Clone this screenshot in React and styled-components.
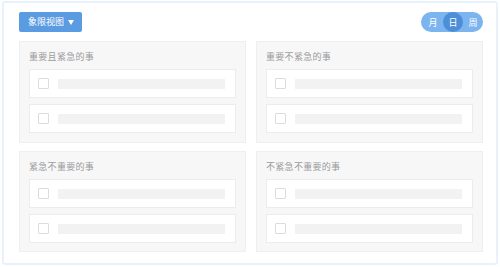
import React from "react";
import styled, { createGlobalStyle } from "styled-components";

const GlobalStyle = createGlobalStyle`
  html, body {
    margin: 0;
    padding: 0;
    background: #ffffff;
  }
  body {
    font-family: "Noto Sans CJK SC", "Liberation Sans", sans-serif;
  }
`;

const Frame = styled.div`
  box-sizing: border-box;
  width: 496px;
  height: 264px;
  margin: 1px 2px 0 2px;
  border: 2px solid #e8f2fd;
  border-radius: 3px;
  background: #fff;
  padding: 9px 13px 0 15px;
`;

const Toolbar = styled.div`
  display: flex;
  justify-content: space-between;
  align-items: center;
  height: 20px;
  margin-bottom: 9px;
`;

const ViewButton = styled.button`
  display: flex;
  align-items: center;
  gap: 4px;
  height: 20px;
  padding: 0 8px 0 9px;
  border: none;
  border-radius: 2px;
  background: #5b9be2;
  color: #fff;
  font-family: inherit;
  font-size: 9px;
  line-height: 20px;
  cursor: pointer;
`;

const Caret = styled.span`
  width: 0;
  height: 0;
  border-left: 3.5px solid transparent;
  border-right: 3.5px solid transparent;
  border-top: 5px solid #fff;
  margin-top: 1px;
`;

const Toggle = styled.div`
  display: flex;
  align-items: center;
  height: 20px;
  padding: 0 0 0 2px;
  border-radius: 10px;
  background: #7cb4ef;
`;

const ToggleItem = styled.span`
  width: 20px;
  height: 20px;
  border-radius: 50%;
  display: flex;
  align-items: center;
  justify-content: center;
  font-size: 9px;
  color: #fff;
  background: ${(p) => (p.$active ? "#4d8ed8" : "transparent")};
`;

const Grid = styled.div`
  display: grid;
  grid-template-columns: 227px 227px;
  grid-template-rows: 102px 101px;
  column-gap: 10px;
  row-gap: 8px;
`;

const Panel = styled.div`
  box-sizing: border-box;
  background: #f7f7f8;
  border: 1px solid #efefef;
  padding: 0 9px 8px;
  display: flex;
  flex-direction: column;
`;

const PanelTitle = styled.div`
  height: 27px;
  line-height: 29px;
  font-size: 9px;
  letter-spacing: 0.3px;
  color: #9a9a9a;
`;

const TaskList = styled.div`
  display: flex;
  flex-direction: column;
  gap: 6px;
`;

const Task = styled.div`
  box-sizing: border-box;
  height: 29px;
  background: #fff;
  border: 1px solid #ececec;
  display: flex;
  align-items: center;
  padding: 0 10px 0 8px;
  gap: 9px;
`;

const Check = styled.span`
  box-sizing: border-box;
  flex: none;
  width: 11px;
  height: 11px;
  border: 1px solid #dcdcdc;
  border-radius: 1px;
  background: #fff;
`;

const Placeholder = styled.span`
  flex: 1;
  height: 10px;
  background: #f2f2f3;
`;

const quadrants = ["重要且紧急的事", "重要不紧急的事", "紧急不重要的事", "不紧急不重要的事"];

export default function App() {
  return (
    <>
      <GlobalStyle />
      <Frame>
        <Toolbar>
          <ViewButton>
            象限视图
            <Caret />
          </ViewButton>
          <Toggle>
            <ToggleItem>月</ToggleItem>
            <ToggleItem $active>日</ToggleItem>
            <ToggleItem>周</ToggleItem>
          </Toggle>
        </Toolbar>
        <Grid>
          {quadrants.map((title) => (
            <Panel key={title}>
              <PanelTitle>{title}</PanelTitle>
              <TaskList>
                {[0, 1].map((i) => (
                  <Task key={i}>
                    <Check />
                    <Placeholder />
                  </Task>
                ))}
              </TaskList>
            </Panel>
          ))}
        </Grid>
      </Frame>
    </>
  );
}
